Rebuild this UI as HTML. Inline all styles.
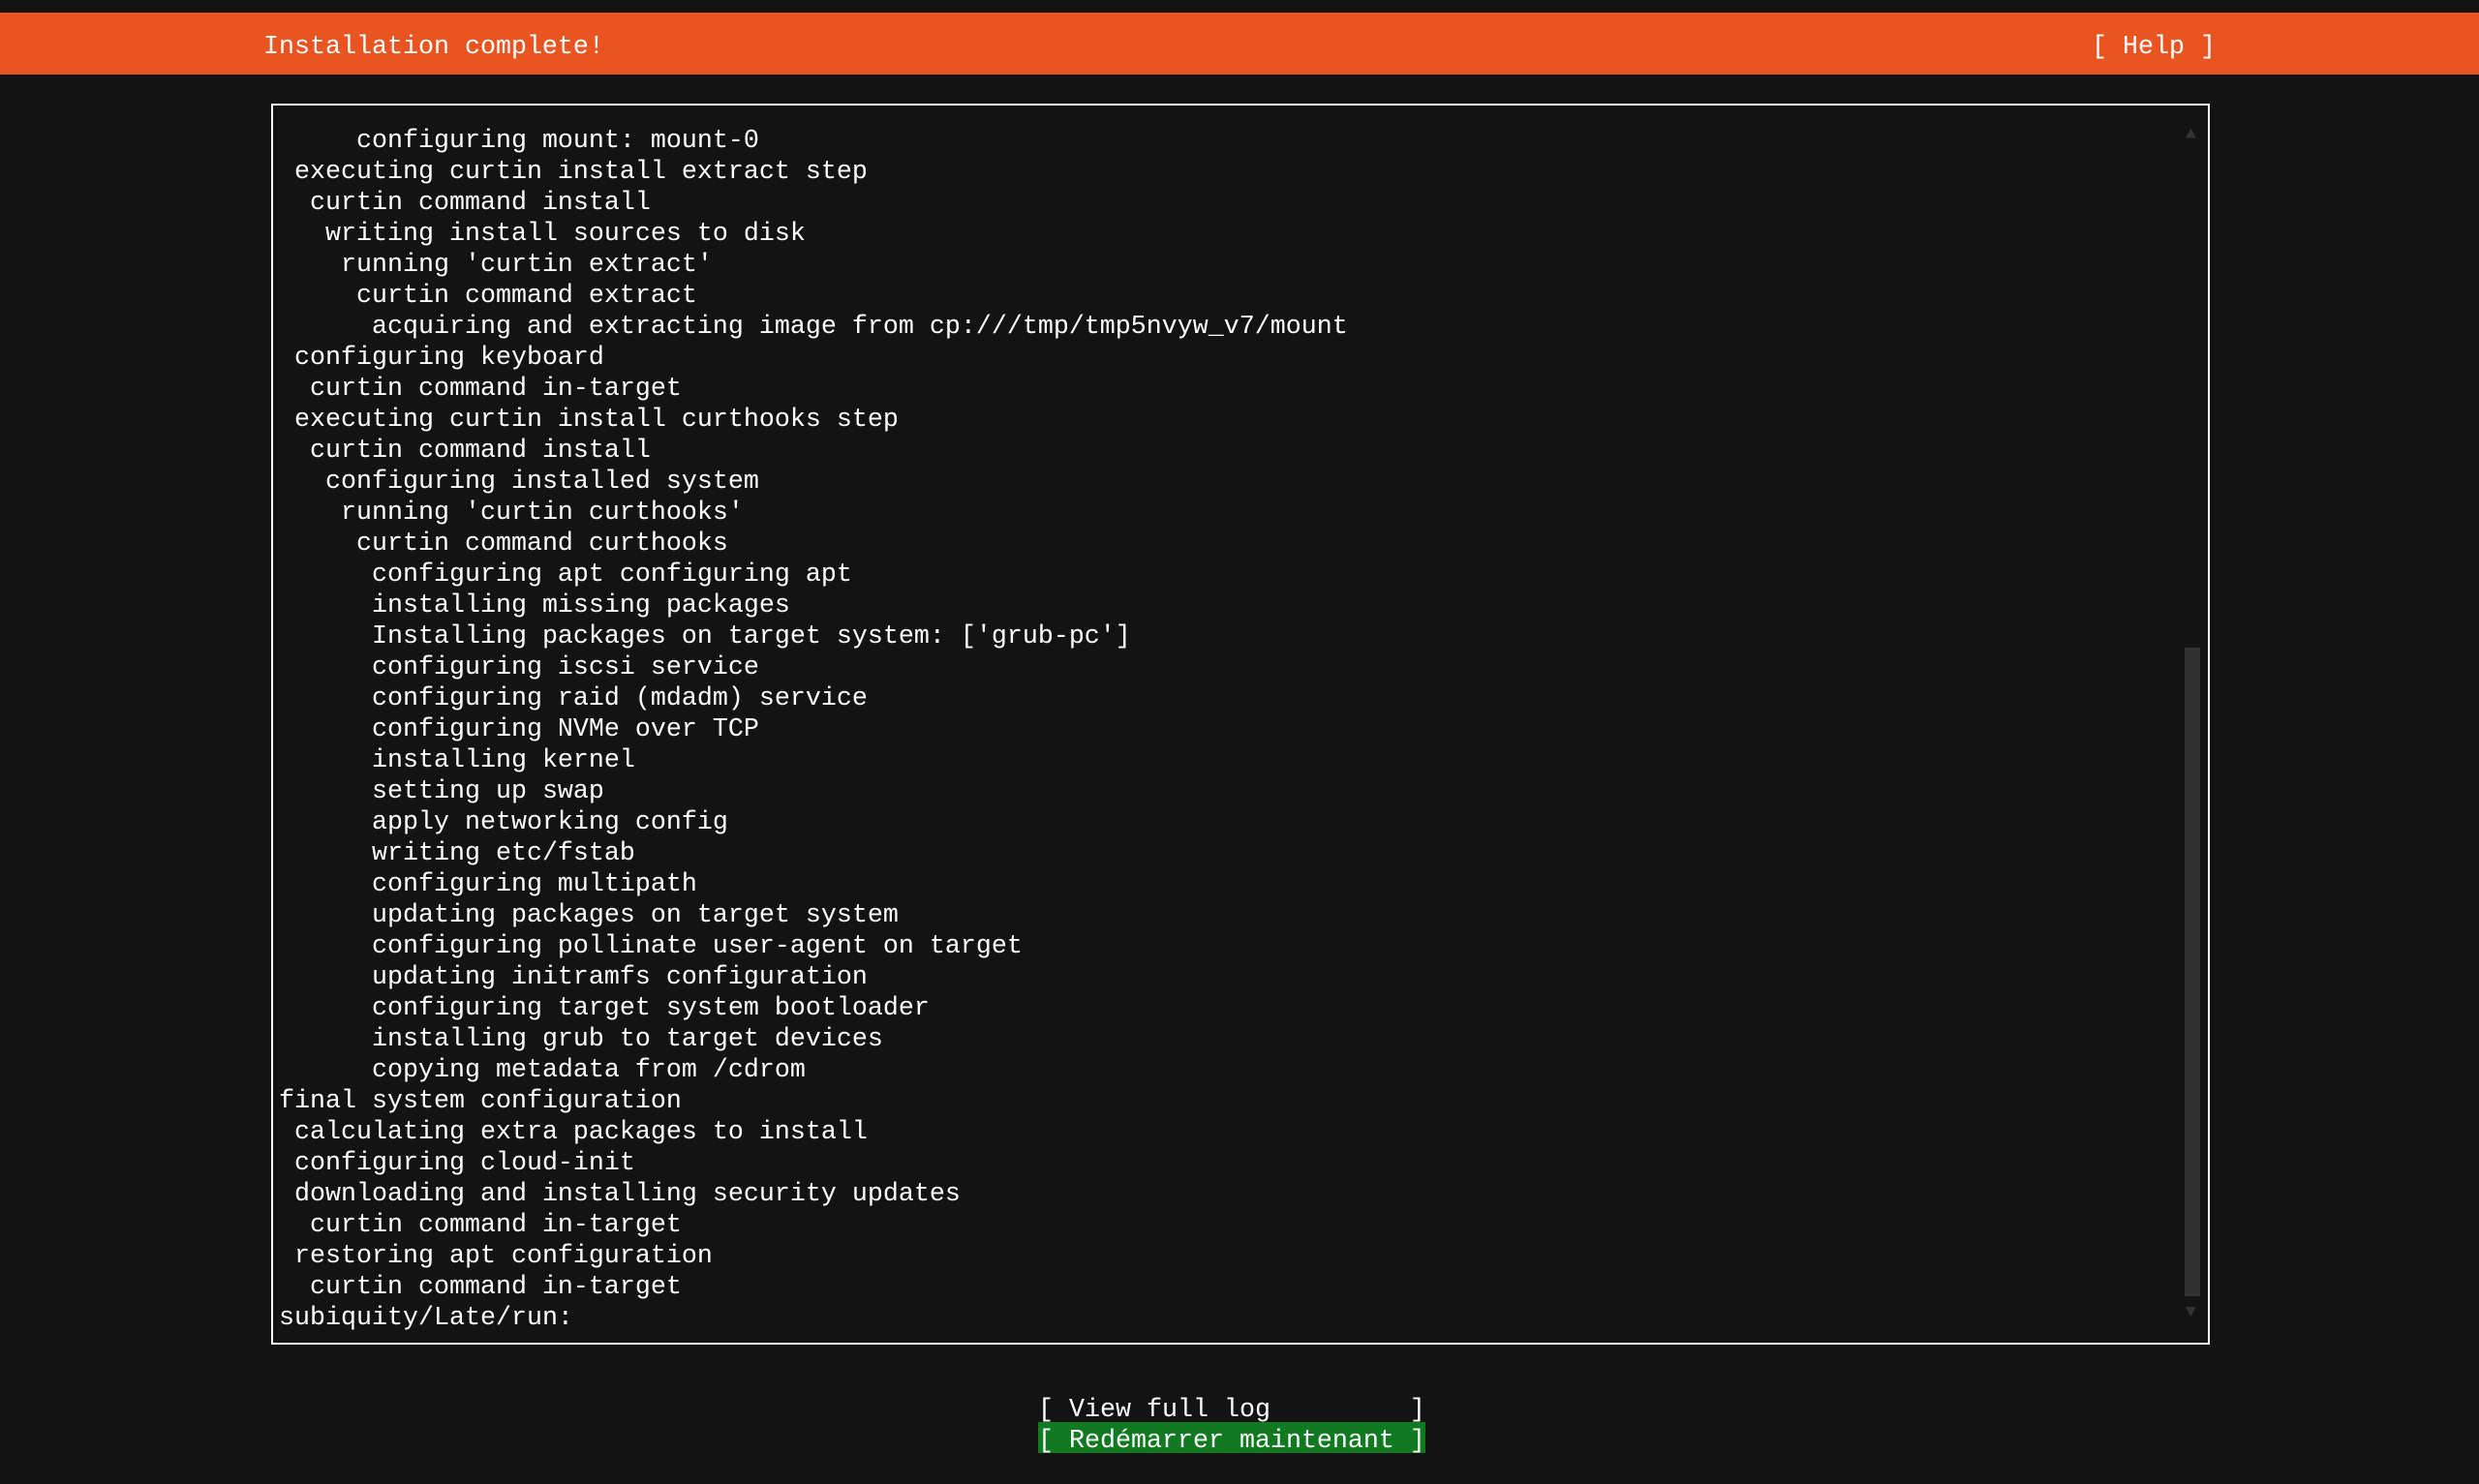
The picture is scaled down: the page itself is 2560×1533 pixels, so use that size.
<!DOCTYPE html>
<html><head><meta charset="utf-8"><style>
html,body{margin:0;padding:0;background:#131313;width:2560px;height:1533px;overflow:hidden;position:relative}
*{font-family:"Liberation Mono","DejaVu Sans Mono",monospace;font-size:26.67px;color:#fff}
.bar{position:absolute;left:0;top:13px;width:2560px;height:64px;background:#E95420}
.t{position:absolute;white-space:pre;line-height:32px;margin:0}
.box{position:absolute;left:280px;top:107px;width:1998px;height:1278px;border:2px solid #fff}
.thumb{position:absolute;left:2256px;top:669px;width:16px;height:670px;background:#303030}
.arr{position:absolute;color:#333;font-size:18px;line-height:18px}
.green{position:absolute;left:1072px;top:1469px;width:400px;height:32px;background:#0f7a1f}
</style></head><body>
<div class="bar"></div>
<pre class="t" style="left:272px;top:33px">Installation complete!</pre>
<pre class="t" style="left:2160px;top:33px">[ Help ]</pre>
<div class="box"></div>
<div class="thumb"></div>
<div class="arr" style="left:2257px;top:130px">▲</div>
<div class="arr" style="left:2257px;top:1347px">▼</div>
<pre class="t" style="left:288px;top:130px">     configuring mount: mount-0
 executing curtin install extract step
  curtin command install
   writing install sources to disk
    running 'curtin extract'
     curtin command extract
      acquiring and extracting image from cp:///tmp/tmp5nvyw_v7/mount
 configuring keyboard
  curtin command in-target
 executing curtin install curthooks step
  curtin command install
   configuring installed system
    running 'curtin curthooks'
     curtin command curthooks
      configuring apt configuring apt
      installing missing packages
      Installing packages on target system: ['grub-pc']
      configuring iscsi service
      configuring raid (mdadm) service
      configuring NVMe over TCP
      installing kernel
      setting up swap
      apply networking config
      writing etc/fstab
      configuring multipath
      updating packages on target system
      configuring pollinate user-agent on target
      updating initramfs configuration
      configuring target system bootloader
      installing grub to target devices
      copying metadata from /cdrom
final system configuration
 calculating extra packages to install
 configuring cloud-init
 downloading and installing security updates
  curtin command in-target
 restoring apt configuration
  curtin command in-target
subiquity/Late/run:</pre>
<div class="green"></div>
<pre class="t" style="left:1072px;top:1441px">[ View full log         ]
[ Redémarrer maintenant ]</pre>
</body></html>
